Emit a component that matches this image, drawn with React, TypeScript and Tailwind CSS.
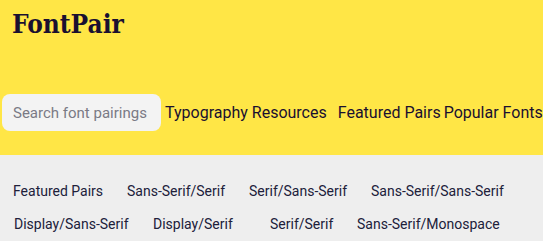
import React from 'react';

const navLinks = ['Typography Resources', 'Featured Pairs', 'Popular Fonts'];

// tag rows, widths measured so the labels sit where the original puts them
const tagRows: { label: string; w: string }[][] = [
  [
    { label: 'Featured Pairs', w: 'w-[114px]' },
    { label: 'Sans-Serif/Serif', w: 'w-[122px]' },
    { label: 'Serif/Sans-Serif', w: 'w-[122px]' },
    { label: 'Sans-Serif/Sans-Serif', w: 'w-auto' },
  ],
  [
    { label: 'Display/Sans-Serif', w: 'w-[139px]' },
    { label: 'Display/Serif', w: 'w-[117px]' },
    { label: 'Serif/Serif', w: 'w-[87px]' },
    { label: 'Sans-Serif/Monospace', w: 'w-auto' },
  ],
];

export default function App() {
  return (
    <div className="w-[543px] h-[241px] overflow-hidden font-['Roboto',sans-serif]">
      {/* Cabeçalho amarelo */}
      <header className="h-[155px] bg-[#ffe646] flex flex-col">
        <div className="pl-[12px] pt-[10px] h-[94px]">
          <span className="text-[26px] leading-[28px] font-bold text-[#1a1030] font-['DejaVu_Serif_Condensed','DejaVu_Serif',serif] [font-stretch:condensed]">
            FontPair
          </span>
        </div>
        <div className="flex items-center whitespace-nowrap">
          <input
            type="text"
            placeholder="Search font pairings"
            className="ml-[2px] w-[159px] h-[37px] rounded-[8px] bg-[#f3f3f3] pl-[11px] pr-[4px] text-[15px] text-[#333] placeholder:text-[#7a7a85] outline-none"
          />
          <nav className="flex items-center text-[16px] text-[#1a1030]">
            <a className="ml-[4px]">{navLinks[0]}</a>
            <a className="ml-[11px]">{navLinks[1]}</a>
            <a className="ml-[3px]">{navLinks[2]}</a>
          </nav>
        </div>
      </header>

      {/* Categorias */}
      <div className="bg-[#eeeeee] h-[86px] pt-[26px] text-[14px] leading-[20px] text-[#20203a]">
        {tagRows.map((row, i) => (
          <div key={i} className={`flex whitespace-nowrap ${i === 0 ? 'pl-[13px]' : 'pl-[14px] mt-[13px]'}`}>
            {row.map((t) => (
              <a key={t.label} className={`${t.w} shrink-0`}>
                {t.label}
              </a>
            ))}
          </div>
        ))}
      </div>
    </div>
  );
}
